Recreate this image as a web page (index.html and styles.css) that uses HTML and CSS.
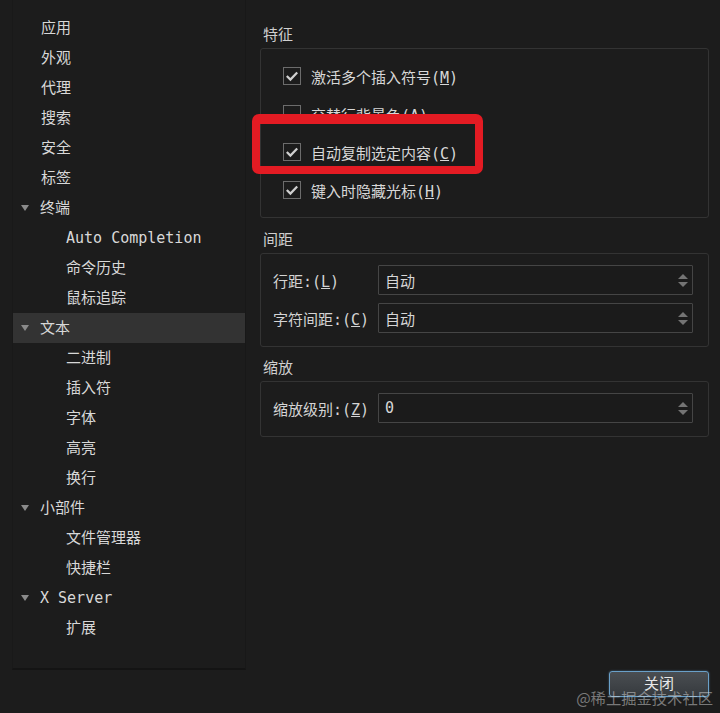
FILE: index.html
```html
<!DOCTYPE html>
<html lang="zh">
<head>
<meta charset="utf-8">
<title>设置</title>
<link rel="stylesheet" href="styles.css">
</head>
<body>
<div class="window">
  <nav class="tree">
    <div class="row top">应用</div>
    <div class="row top">外观</div>
    <div class="row top">代理</div>
    <div class="row top">搜索</div>
    <div class="row top">安全</div>
    <div class="row top">标签</div>
    <div class="row exp"><span class="arrow"></span>终端</div>
    <div class="row child">Auto Completion</div>
    <div class="row child">命令历史</div>
    <div class="row child">鼠标追踪</div>
    <div class="row exp sel"><span class="arrow"></span>文本</div>
    <div class="row child">二进制</div>
    <div class="row child">插入符</div>
    <div class="row child">字体</div>
    <div class="row child">高亮</div>
    <div class="row child">换行</div>
    <div class="row exp"><span class="arrow"></span>小部件</div>
    <div class="row child">文件管理器</div>
    <div class="row child">快捷栏</div>
    <div class="row exp"><span class="arrow"></span>X Server</div>
    <div class="row child">扩展</div>
  </nav>

  <main class="panel">
    <div class="sec-title">特征</div>
    <div class="group g-feat">
      <div class="check">
        <svg class="cb" width="18" height="18" viewBox="0 0 18 18"><rect x="0.5" y="0.5" width="17" height="17" fill="#1c1c1c" stroke="#6c6c6c"/><path d="M3.8 9 L7.4 12.6 L14.2 5.4" fill="none" stroke="#d0d0d0" stroke-width="2.2"/></svg>
        <span>激活多个插入符号(<u>M</u>)</span>
      </div>
      <div class="check">
        <svg class="cb" width="18" height="18" viewBox="0 0 18 18"><rect x="0.5" y="0.5" width="17" height="17" fill="#1c1c1c" stroke="#6c6c6c"/></svg>
        <span>交替行背景色(<u>A</u>)</span>
      </div>
      <div class="check">
        <svg class="cb" width="18" height="18" viewBox="0 0 18 18"><rect x="0.5" y="0.5" width="17" height="17" fill="#1c1c1c" stroke="#6c6c6c"/><path d="M3.8 9 L7.4 12.6 L14.2 5.4" fill="none" stroke="#d0d0d0" stroke-width="2.2"/></svg>
        <span>自动复制选定内容(<u>C</u>)</span>
      </div>
      <div class="check">
        <svg class="cb" width="18" height="18" viewBox="0 0 18 18"><rect x="0.5" y="0.5" width="17" height="17" fill="#1c1c1c" stroke="#6c6c6c"/><path d="M3.8 9 L7.4 12.6 L14.2 5.4" fill="none" stroke="#d0d0d0" stroke-width="2.2"/></svg>
        <span>键入时隐藏光标(<u>H</u>)</span>
      </div>
      <div class="highlight"></div>
    </div>

    <div class="sec-title sp">间距</div>
    <div class="group g-form">
      <div class="frow">
        <span class="flabel">行距:(<u>L</u>)</span>
        <div class="spin"><span>自动</span><span class="arrows"><i class="up"></i><i class="down"></i></span></div>
      </div>
      <div class="frow">
        <span class="flabel">字符间距:(<u>C</u>)</span>
        <div class="spin"><span>自动</span><span class="arrows"><i class="up"></i><i class="down"></i></span></div>
      </div>
    </div>

    <div class="sec-title sp2">缩放</div>
    <div class="group g-form">
      <div class="frow">
        <span class="flabel">缩放级别:(<u>Z</u>)</span>
        <div class="spin"><span>0</span><span class="arrows"><i class="up"></i><i class="down"></i></span></div>
      </div>
    </div>

    <div class="footer">
      <button class="btn">关闭</button>
    </div>
  </main>

  <div class="watermark">@稀土掘金技术社区</div>
</div>
</body>
</html>
```

FILE: styles.css
```css
* {
  box-sizing: border-box;
}

html, body {
  margin: 0;
  padding: 0;
  background: #1c1c1c;
}

body {
  font-family: "DejaVu Sans Mono", "Noto Sans CJK SC", monospace;
  font-size: 15px;
  color: #d6d6d6;
}

.window {
  position: relative;
  display: flex;
  width: 720px;
  height: 713px;
  overflow: hidden;
  background: #1c1c1c;
}

/* ---------- tree ---------- */
.tree {
  margin-left: 12px;
  width: 234px;
  height: 670px;
  padding-top: 13px;
  background: #1c1c1c;
  border-left: 1px solid #191919;
  border-right: 1px solid #181818;
  border-bottom: 2px solid #141414;
  flex-shrink: 0;
}

.row {
  display: flex;
  align-items: center;
  height: 30px;
  line-height: 30px;
  white-space: nowrap;
  color: #d8d8d8;
}

.row.top {
  padding-left: 28px;
}

.row.child {
  padding-left: 53px;
}

.row.exp {
  padding-left: 8px;
}

.row.sel {
  background: #333333;
}

.arrow {
  width: 0;
  height: 0;
  border-left: 4.5px solid transparent;
  border-right: 4.5px solid transparent;
  border-top: 6px solid #8a8a8a;
  margin-right: 11px;
}

/* ---------- panel ---------- */
.panel {
  display: flex;
  flex-direction: column;
  margin-left: 14px;
  width: 449px;
  height: 713px;
  padding-top: 25px;
}

.sec-title {
  height: 20px;
  line-height: 20px;
  padding-left: 3px;
  margin-bottom: 3px;
  color: #cfcfcf;
}

.sec-title.sp {
  margin-top: 12px;
}

.sec-title.sp2 {
  margin-top: 11px;
}

.group {
  position: relative;
  border: 1px solid #333333;
  border-radius: 3px;
}

.g-feat {
  padding: 8px 0 8px 22px;
}

.check {
  display: flex;
  align-items: center;
  gap: 10px;
  height: 38px;
  color: #d8d8d8;
}

.cb {
  display: block;
  flex-shrink: 0;
}

u {
  text-decoration: underline;
  text-underline-offset: 1px;
}

.highlight {
  position: absolute;
  left: -9px;
  top: 65px;
  width: 231px;
  height: 60px;
  border: 8px solid #e31b23;
  border-top-width: 10px;
  border-radius: 7px;
}

.g-form {
  display: flex;
  flex-direction: column;
  gap: 8px;
  padding: 11px 15px 13px 12px;
}

.frow {
  display: flex;
  align-items: center;
  height: 30px;
}

.flabel {
  width: 105px;
  flex-shrink: 0;
  white-space: nowrap;
  color: #d4d4d4;
}

.spin {
  flex: 1;
  height: 30px;
  display: flex;
  align-items: center;
  justify-content: space-between;
  padding-left: 6px;
  padding-right: 4px;
  background: #1b1b1b;
  border: 1px solid #454545;
  border-radius: 1px;
  color: #d6d6d6;
}

.arrows {
  display: flex;
  flex-direction: column;
  gap: 3px;
}

.arrows i {
  display: block;
  width: 0;
  height: 0;
  border-left: 5px solid transparent;
  border-right: 5px solid transparent;
}

.arrows .up {
  border-bottom: 5px solid #747474;
}

.arrows .down {
  border-top: 5px solid #747474;
}

/* ---------- footer ---------- */
.footer {
  margin-top: auto;
  display: flex;
  justify-content: flex-end;
  padding-bottom: 16px;
}

.btn {
  width: 100px;
  height: 26px;
  padding: 0 0 4px 0;
  font-family: "Noto Sans CJK SC", sans-serif;
  font-size: 15px;
  color: #e8e8e8;
  background: linear-gradient(#4a4e52, #363a3e);
  border: 1px solid #6aa0c8;
  border-radius: 3px;
  box-shadow: 0 0 2px rgba(110, 170, 220, 0.6);
}

.watermark {
  position: absolute;
  right: 7px;
  bottom: 6px;
  font-family: "Noto Sans CJK SC", sans-serif;
  font-size: 15.3px;
  line-height: 20px;
  color: rgba(215, 215, 215, 0.5);
  white-space: nowrap;
}
```
